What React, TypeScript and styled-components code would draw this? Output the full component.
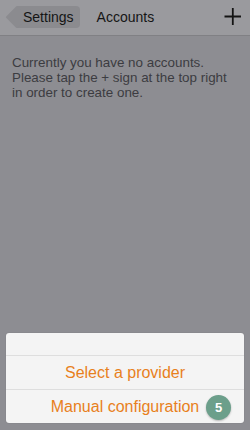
import styled, { createGlobalStyle } from "styled-components";

const Global = createGlobalStyle`
  html, body {
    margin: 0;
    padding: 0;
    background: #8d8d92;
  }
  * { box-sizing: border-box; }
`;

const Screen = styled.div`
  width: 250px;
  height: 430px;
  display: flex;
  flex-direction: column;
  background: #8d8d92;
  font-family: "Liberation Sans", Arial, sans-serif;
  overflow: hidden;
`;

const NavBar = styled.header`
  height: 36px;
  display: flex;
  align-items: center;
  padding: 0 8px 2px 17px;
  background: #9a9a9e;
  border-bottom: 1px solid #808084;
`;

const BackButton = styled.button`
  position: relative;
  height: 22px;
  padding: 0 6px;
  border: 0;
  border-radius: 0 4px 4px 0;
  background: #8b8b8f;
  color: #151515;
  font: 14px "Liberation Sans", Arial, sans-serif;
  cursor: pointer;

  &::before {
    content: "";
    position: absolute;
    top: 3.2px;
    left: -7.8px;
    width: 15.6px;
    height: 15.6px;
    background: #8b8b8f;
    border-radius: 1px;
    transform: rotate(45deg);
  }

  & span {
    position: relative;
  }
`;

const Title = styled.h1`
  flex: 1;
  margin: 0 0 0 17px;
  font-size: 14px;
  font-weight: normal;
  color: #151515;
`;

const AddButton = styled.button`
  display: flex;
  padding: 0;
  border: 0;
  background: none;
  cursor: pointer;
`;

const Message = styled.p`
  margin: 0;
  padding: 19px 12px 8px;
  font-size: 13.4px;
  line-height: 15px;
  color: #3c3c41;
`;

const Sheet = styled.div`
  margin: auto 6px 7px;
  background: #f4f4f4;
  border-radius: 3px;
  box-shadow: 0 0 1px rgba(0, 0, 0, 0.25);
  overflow: hidden;
`;

const SheetRow = styled.div<{ $height: number }>`
  position: relative;
  height: ${(p) => p.$height}px;
  display: flex;
  align-items: center;
  justify-content: center;
  font-size: 16px;
  color: #e8801c;
  cursor: pointer;

  & + & {
    border-top: 1px solid #dedede;
  }
`;

const Badge = styled.span`
  position: absolute;
  right: 13px;
  top: 5px;
  width: 25px;
  height: 25px;
  border-radius: 50%;
  display: flex;
  align-items: center;
  justify-content: center;
  background: #6c9f8b;
  color: #fff;
  font-size: 13px;
  font-weight: bold;
  box-shadow: 0 1px 2px rgba(0, 0, 0, 0.25);
`;

export default function App() {
  return (
    <>
      <Global />
      <Screen>
        <NavBar>
          <BackButton type="button">
            <span>Settings</span>
          </BackButton>
          <Title>Accounts</Title>
          <AddButton type="button" aria-label="Add account">
            <svg width="19" height="19" viewBox="0 0 19 19">
              <path d="M1.5 9.5h16.5M9.8 1v17" stroke="#141414" strokeWidth="1.8" fill="none" />
            </svg>
          </AddButton>
        </NavBar>
        <Message>
          Currently you have no accounts.
          <br />
          Please tap the + sign at the top right
          <br />
          in order to create one.
        </Message>
        <Sheet>
          <SheetRow $height={22} />
          <SheetRow $height={34}>Select a provider</SheetRow>
          <SheetRow $height={34}>
            Manual configuration
            <Badge>5</Badge>
          </SheetRow>
        </Sheet>
      </Screen>
    </>
  );
}
